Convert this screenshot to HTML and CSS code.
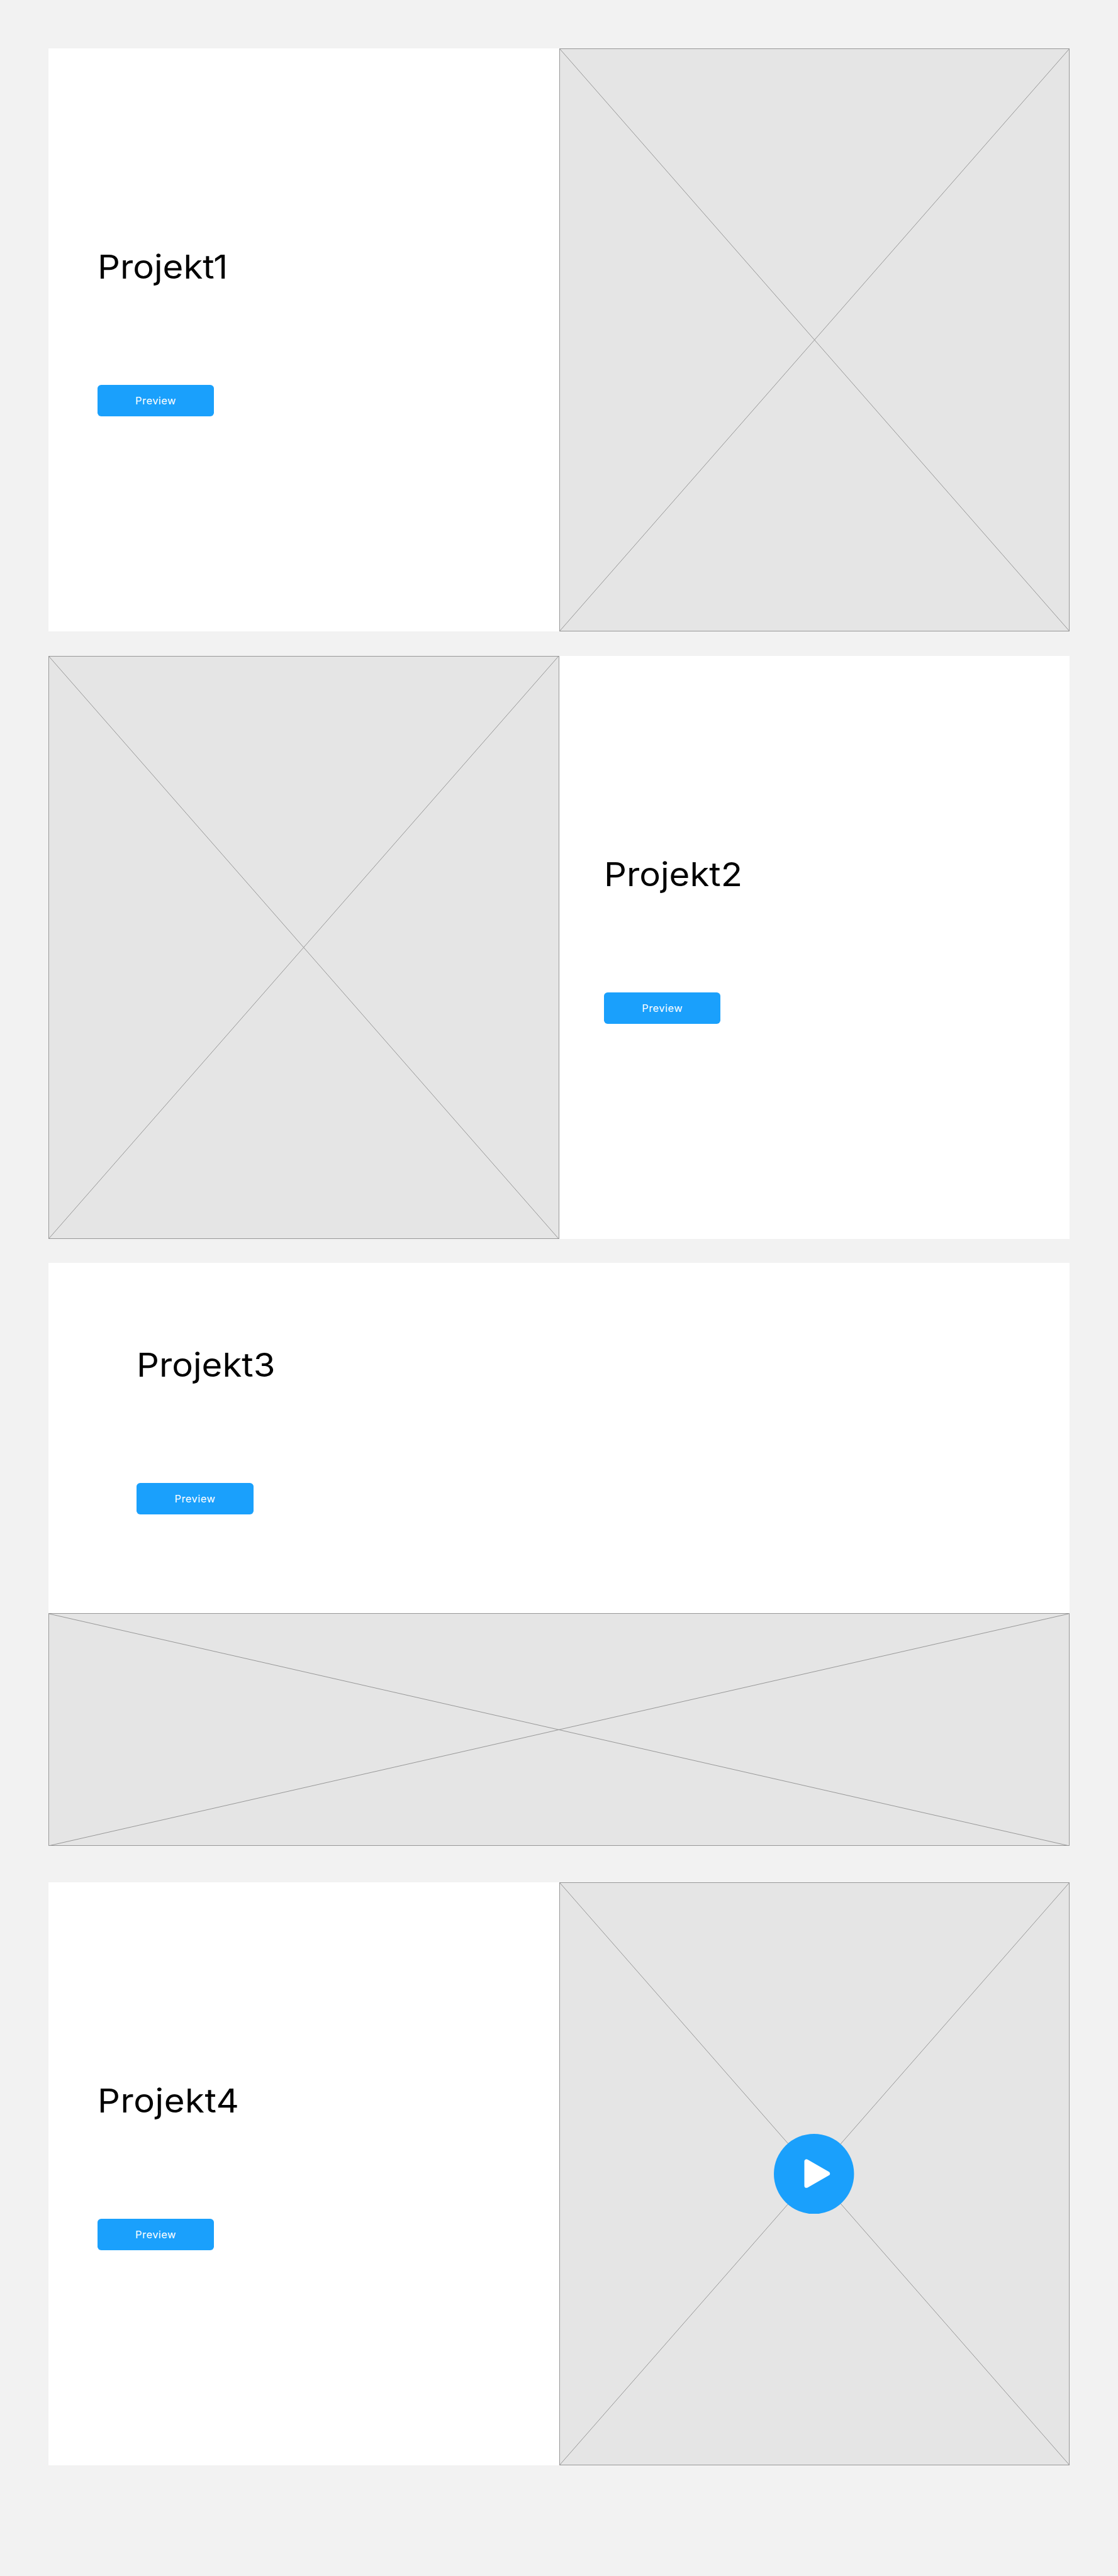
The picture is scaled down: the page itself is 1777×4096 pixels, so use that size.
FILE: index.html
```
<!DOCTYPE html>
<html lang="de">
<head>
<meta charset="utf-8">
<title>Projekte</title>
<link rel="stylesheet" href="styles.css">
</head>
<body>
<main class="projects">
  <section class="project">
    <div class="copy">
      <h2 class="title">Projek<span class="tight">t</span>1</h2>
      <a class="button">Preview</a>
    </div>
    <div class="media">
      <svg class="cross" viewBox="0 0 100 100" preserveAspectRatio="none"><path d="M0 0L100 100M100 0L0 100"/></svg>
    </div>
  </section>
  <section class="project">
    <div class="media">
      <svg class="cross" viewBox="0 0 100 100" preserveAspectRatio="none"><path d="M0 0L100 100M100 0L0 100"/></svg>
    </div>
    <div class="copy copy-right">
      <h2 class="title">Projekt2</h2>
      <a class="button">Preview</a>
    </div>
  </section>
  <section class="project project-wide">
    <div class="copy copy-wide">
      <h2 class="title">Projekt3</h2>
      <a class="button">Preview</a>
    </div>
    <div class="media">
      <svg class="cross" viewBox="0 0 100 100" preserveAspectRatio="none"><path d="M0 0L100 100M100 0L0 100"/></svg>
    </div>
  </section>
  <section class="project project-video">
    <div class="copy">
      <h2 class="title title-loose">Projekt4</h2>
      <a class="button">Preview</a>
    </div>
    <div class="media">
      <svg class="cross" viewBox="0 0 100 100" preserveAspectRatio="none"><path d="M0 0L100 100M100 0L0 100"/></svg>
      <svg class="play" viewBox="0 0 132 132"><circle cx="66" cy="66" r="66"/><path d="M53.7 45.3V85.4L88.8 65.4Z"/></svg>
    </div>
  </section>
</main>
</body>
</html>
```
FILE: styles.css
```
:root {
  --u: calc(100vh / 4242);
}
* {
  box-sizing: border-box;
}
body {
  margin: 0;
  background: #f2f2f2;
  color: #000;
  font-family: Inter, sans-serif;
}
.projects {
  display: flex;
  flex-direction: column;
  gap: calc(var(--u) * 40);
  height: 100vh;
  padding: calc(var(--u) * 80) calc(var(--u) * 80) 0;
}
.project {
  display: grid;
  grid-template-columns: 1fr 1fr;
  flex: none;
  height: calc(var(--u) * 960);
  background: #fff;
}
.project-wide {
  grid-template-columns: 1fr;
  grid-template-rows: 1fr calc(var(--u) * 384);
}
.project-video {
  margin-top: calc(var(--u) * 20);
}
.copy {
  display: flex;
  flex-direction: column;
  align-items: flex-start;
  gap: calc(var(--u) * 160);
  padding: calc(var(--u) * 326) 0 0 calc(var(--u) * 80.4);
}
.copy-right {
  padding-left: calc(var(--u) * 74);
}
.copy-wide {
  padding: calc(var(--u) * 134) 0 0 calc(var(--u) * 145);
}
.title {
  margin: 0;
  font-size: calc(var(--u) * 54);
  line-height: calc(var(--u) * 68);
  font-weight: 400;
  transform: scaleX(1.08);
  transform-origin: left;
}
.title-loose {
  letter-spacing: calc(var(--u) * 0.5);
}
.tight {
  letter-spacing: calc(var(--u) * -1.5);
}
.button {
  display: flex;
  align-items: center;
  justify-content: center;
  width: calc(var(--u) * 192);
  height: calc(var(--u) * 52);
  border-radius: calc(var(--u) * 6);
  background: #1aa0fc;
  color: #fff;
  font-size: calc(var(--u) * 17);
  letter-spacing: calc(var(--u) * 0.5);
}
.media {
  display: grid;
  place-items: center;
  border: 1px solid #979797;
  background: #e5e5e5;
}
.cross,
.play {
  grid-area: 1 / 1;
}
.cross {
  width: 100%;
  height: 100%;
  min-height: 0;
  fill: none;
  stroke: #979797;
}
.cross path {
  vector-effect: non-scaling-stroke;
}
.play {
  width: calc(var(--u) * 132);
  height: calc(var(--u) * 132);
  fill: #1aa0fc;
}
.play path {
  fill: #fff;
  stroke: #fff;
  stroke-width: 7;
  stroke-linejoin: round;
}
```
